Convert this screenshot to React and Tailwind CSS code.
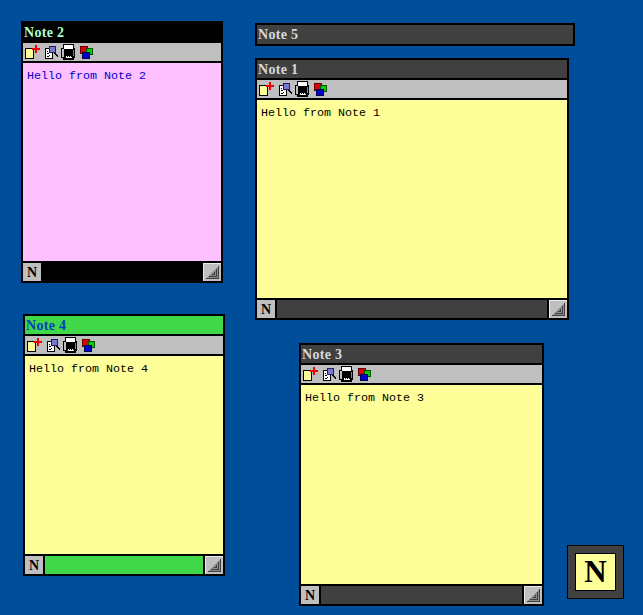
const notes = [
  {
    title: "Note 2",
    pos: "left-[21px] top-[21px] w-[202px] h-[262px]",
    bar: "bg-black",
    titleColor: "text-[#aaffcc]",
    body: "bg-[#ffc0ff]",
    bodyColor: "text-[#0000cc]",
  },
  {
    title: "Note 4",
    pos: "left-[23px] top-[314px] w-[202px] h-[262px]",
    bar: "bg-[#40d848]",
    titleColor: "text-[#0040c0]",
    body: "bg-[#ffff99]",
    bodyColor: "text-black",
  },
  {
    title: "Note 1",
    pos: "left-[255px] top-[58px] w-[314px] h-[262px]",
    bar: "bg-[#404040]",
    titleColor: "text-[#d8d8d8]",
    body: "bg-[#ffff99]",
    bodyColor: "text-black",
  },
  {
    title: "Note 3",
    pos: "left-[299px] top-[343px] w-[245px] h-[263px]",
    bar: "bg-[#404040]",
    titleColor: "text-[#d8d8d8]",
    body: "bg-[#ffff99]",
    bodyColor: "text-black",
  },
];

function NewIcon() {
  return (
    <svg width="16" height="16" viewBox="0 0 16 16" shapeRendering="crispEdges">
      <rect x="1.5" y="4.5" width="8" height="10" fill="#ffff99" stroke="#000" />
      <rect x="11" y="1" width="2" height="8" fill="#f00000" />
      <rect x="8" y="4" width="8" height="2" fill="#f00000" />
    </svg>
  );
}

function FindIcon() {
  return (
    <svg width="16" height="16" viewBox="0 0 16 16" shapeRendering="crispEdges">
      <rect x="3.5" y="4.5" width="7" height="10" fill="#fff" stroke="#000" />
      <rect x="5" y="7" width="1" height="1" fill="#000" />
      <rect x="5" y="9" width="2" height="1" fill="#000" />
      <rect x="7" y="11" width="1" height="1" fill="#000" />
      <rect x="5" y="12" width="2" height="1" fill="#000" />
      <rect x="7.5" y="2.5" width="6" height="6" fill="#7878d0" stroke="#202060" />
      <path d="M13 9h1v1h1v1h1v2h-1v-1h-1v-1h-1v-1h-1v-1z" fill="#000" />
    </svg>
  );
}

function PrintIcon() {
  return (
    <svg width="16" height="16" viewBox="0 0 16 16" shapeRendering="crispEdges">
      <path d="M3 0h11v4h1v10h-1v2H3v-2H1V4h2z" fill="#000" />
      <rect x="4" y="1" width="9" height="4" fill="#fff" />
      <rect x="2" y="5" width="2" height="8" fill="#bfbfbf" />
      <rect x="13" y="6" width="1" height="6" fill="#808080" />
      <path d="M6 12h1v1h1v-1h1v1h1v-1h1v1h1v1H6z" fill="#fff" />
    </svg>
  );
}

function ColorIcon() {
  return (
    <svg width="16" height="16" viewBox="0 0 16 16" shapeRendering="crispEdges">
      <rect x="2.5" y="2.5" width="7" height="7" fill="#e00000" stroke="#600000" />
      <rect x="8.5" y="4.5" width="6" height="6" fill="#00d000" stroke="#005000" />
      <rect x="4.5" y="8.5" width="7" height="6" fill="#0000c8" stroke="#000050" />
    </svg>
  );
}

function Grip() {
  return (
    <div className="flex w-[18px] h-[18px] bg-[#bfbfbf]">
      <svg width="18" height="18" viewBox="0 0 18 18" shapeRendering="crispEdges">
        <path d="M0 0h18v1H1v17H0z" fill="#ececec" />
        <path d="M16 2v14H2z" fill="#8c8c8c" />
        <path d="M15.5 3v12.5H3" fill="none" stroke="#404040" />
        <path d="M13.5 6v7.5H6" fill="none" stroke="#404040" />
        <path d="M11.5 9v2.5H9" fill="none" stroke="#404040" />
      </svg>
    </div>
  );
}

function Title({ text, color }) {
  return (
    <span className={`pl-px pt-px font-['Liberation_Serif',serif] font-bold text-[14px] leading-none tracking-[0.3px] ${color}`}>
      {text}
    </span>
  );
}

function Note({ note }) {
  return (
    <div className={`absolute flex flex-col border-2 border-black ${note.pos}`}>
      <div className={`flex items-center h-[20px] shrink-0 border-b-2 border-black ${note.bar}`}>
        <Title text={note.title} color={note.titleColor} />
      </div>
      <div className="flex items-center gap-[2px] h-[18px] shrink-0 pl-px bg-[#bfbfbf]">
        <NewIcon />
        <FindIcon />
        <PrintIcon />
        <ColorIcon />
      </div>
      <div className={`flex-1 border-y-2 border-black pl-1 pt-[6px] font-['Liberation_Mono',monospace] text-[11.67px] leading-[14px] ${note.body} ${note.bodyColor}`}>
        Hello from {note.title}
      </div>
      <div className="flex h-[18px] shrink-0 bg-black">
        <div className="flex items-center justify-center w-[18px] h-[18px] bg-[#bfbfbf] font-['Liberation_Serif',serif] font-bold text-[14px] text-black">
          N
        </div>
        <div className={`flex-1 mx-[2px] ${note.bar}`} />
        <Grip />
      </div>
    </div>
  );
}

export default function App() {
  return (
    <div className="relative w-[643px] h-[615px] overflow-hidden bg-[#004d99]">
      {notes.map((note) => (
        <Note key={note.title} note={note} />
      ))}

      {/* collapsed note, title bar only */}
      <div className="absolute left-[255px] top-[23px] w-[320px] h-[23px] flex items-center border-2 border-black bg-[#404040]">
        <span className="pl-px font-['Liberation_Serif',serif] font-bold text-[14px] leading-none tracking-[0.3px] text-[#d8d8d8]">
          Note 5
        </span>
      </div>

      {/* desktop icon */}
      <div className="absolute left-[567px] top-[545px] w-[57px] h-[54px] flex items-center justify-center border border-black bg-[#404040]">
        <div className="flex items-center justify-center w-[41px] h-[38px] border border-black bg-[#ffff99] font-['Liberation_Serif',serif] font-bold text-[31px] text-black">
          N
        </div>
      </div>
    </div>
  );
}
